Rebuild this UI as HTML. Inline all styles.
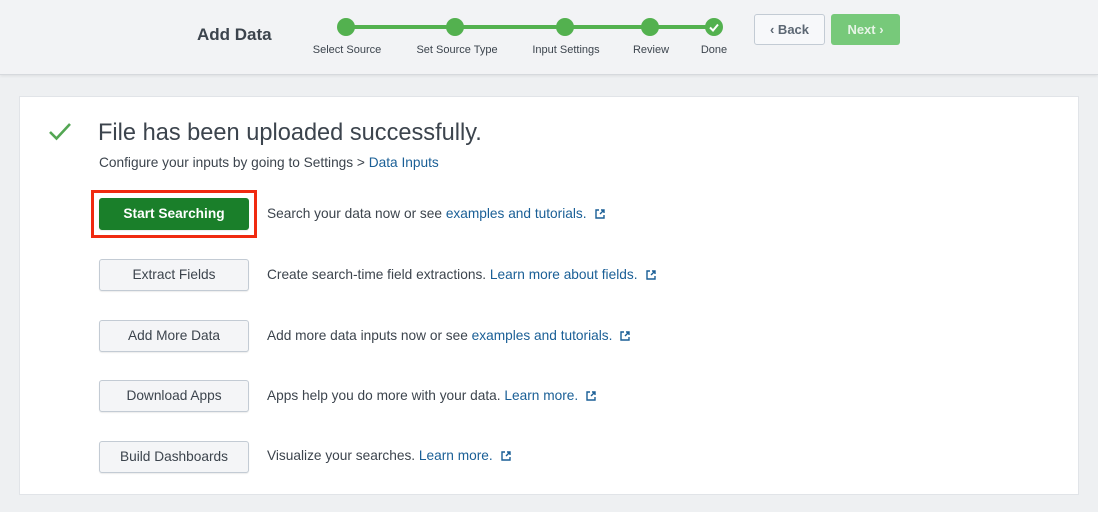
<!DOCTYPE html>
<html><head><style>
*{box-sizing:border-box;margin:0;padding:0}
body{width:1098px;height:512px;background:#eef0f2;font-family:"Liberation Sans",sans-serif;position:relative;overflow:hidden;color:#3c444d}
.hdr{position:absolute;left:0;top:0;width:1098px;height:75px;background:#f2f3f5;border-bottom:1px solid #d6d9dd;box-shadow:0 1px 3px rgba(0,0,0,.08)}
.t{position:absolute;font-size:17px;font-weight:bold;left:197px;top:25px;color:#3c444d}
.line{position:absolute;top:25px;left:346px;width:368px;height:4px;background:#53b14f}
.dot{position:absolute;top:18px;width:18px;height:18px;border-radius:50%;background:#53b14f}
.lbl{position:absolute;top:44px;font-size:11px;color:#3c444d;transform:translateX(-50%);white-space:nowrap}
.back{position:absolute;left:754px;top:14px;width:71px;height:31px;border:1px solid #c3cbd4;border-radius:3px;background:#f7f8fa;font-size:13px;font-weight:bold;color:#5c6773;text-align:center;line-height:29px}
.next{position:absolute;left:831px;top:14px;width:69px;height:31px;border-radius:3px;background:#77c97a;font-size:13px;font-weight:bold;color:#e6f4e6;text-align:center;line-height:31px}
.card{position:absolute;left:19px;top:96px;width:1060px;height:399px;background:#fff;border:1px solid #e1e4e8}
.h1{position:absolute;left:98px;top:120px;font-size:23.6px;color:#3c444d}
.sub{position:absolute;left:99px;top:155px;font-size:13.7px;color:#3c444d}
a{text-decoration:none;color:#1a5f96}
.btn{position:absolute;left:99px;width:150px;height:32px;border:1px solid #c3cbd4;border-radius:3px;background:#f4f5f7;font-size:13.7px;color:#3c444d;text-align:center;line-height:30px;box-shadow:0 1px 1px rgba(0,0,0,.08)}
.desc{position:absolute;left:267px;font-size:13.7px;color:#3c444d;white-space:nowrap}
.ext{margin-left:8px;vertical-align:-1px}
</style></head><body>
<div class="hdr">
<div class="t">Add Data</div>
<div class="line"></div>
<div class="dot" style="left:337px"></div>
<div class="dot" style="left:446px"></div>
<div class="dot" style="left:556px"></div>
<div class="dot" style="left:641px"></div>
<div class="dot" style="left:705px"><svg width="18" height="18"><path d="M5 9.5l3 3 5-6" stroke="#fff" stroke-width="2" fill="none"/></svg></div>
<div class="lbl" style="left:347px">Select Source</div>
<div class="lbl" style="left:457px">Set Source Type</div>
<div class="lbl" style="left:566px">Input Settings</div>
<div class="lbl" style="left:651px">Review</div>
<div class="lbl" style="left:714px">Done</div>
<div class="back">‹ Back</div>
<div class="next">Next ›</div>
</div>
<div class="card"></div>
<svg style="position:absolute;left:47px;top:121px" width="26" height="22"><path d="M3 11l6.5 6.5L23 3" stroke="#53a653" stroke-width="2.6" fill="none"/></svg>
<div class="h1">File has been uploaded successfully.</div>
<div class="sub">Configure your inputs by going to Settings &gt; <a>Data Inputs</a></div>
<div style="position:absolute;left:91px;top:190px;width:166px;height:48px;border:3px solid #f02a10"></div>
<div class="btn" style="top:198px;background:#1a7f2a;border-color:#1a7f2a;color:#fff;font-weight:bold">Start Searching</div>
<div class="desc" style="top:206px">Search your data now or see <a>examples and tutorials.</a><svg class="ext" width="10" height="10"><path d="M4 1H1v8h8V6M5 5l4-4M6 1h3v3" stroke="#1a5f96" stroke-width="1.4" fill="none"/></svg></div>
<div class="btn" style="top:259px">Extract Fields</div>
<div class="desc" style="top:267px">Create search-time field extractions. <a>Learn more about fields.</a><svg class="ext" width="10" height="10"><path d="M4 1H1v8h8V6M5 5l4-4M6 1h3v3" stroke="#1a5f96" stroke-width="1.4" fill="none"/></svg></div>
<div class="btn" style="top:320px">Add More Data</div>
<div class="desc" style="top:328px">Add more data inputs now or see <a>examples and tutorials.</a><svg class="ext" width="10" height="10"><path d="M4 1H1v8h8V6M5 5l4-4M6 1h3v3" stroke="#1a5f96" stroke-width="1.4" fill="none"/></svg></div>
<div class="btn" style="top:380px">Download Apps</div>
<div class="desc" style="top:388px">Apps help you do more with your data. <a>Learn more.</a><svg class="ext" width="10" height="10"><path d="M4 1H1v8h8V6M5 5l4-4M6 1h3v3" stroke="#1a5f96" stroke-width="1.4" fill="none"/></svg></div>
<div class="btn" style="top:441px">Build Dashboards</div>
<div class="desc" style="top:448px">Visualize your searches. <a>Learn more.</a><svg class="ext" width="10" height="10"><path d="M4 1H1v8h8V6M5 5l4-4M6 1h3v3" stroke="#1a5f96" stroke-width="1.4" fill="none"/></svg></div>
</body></html>
